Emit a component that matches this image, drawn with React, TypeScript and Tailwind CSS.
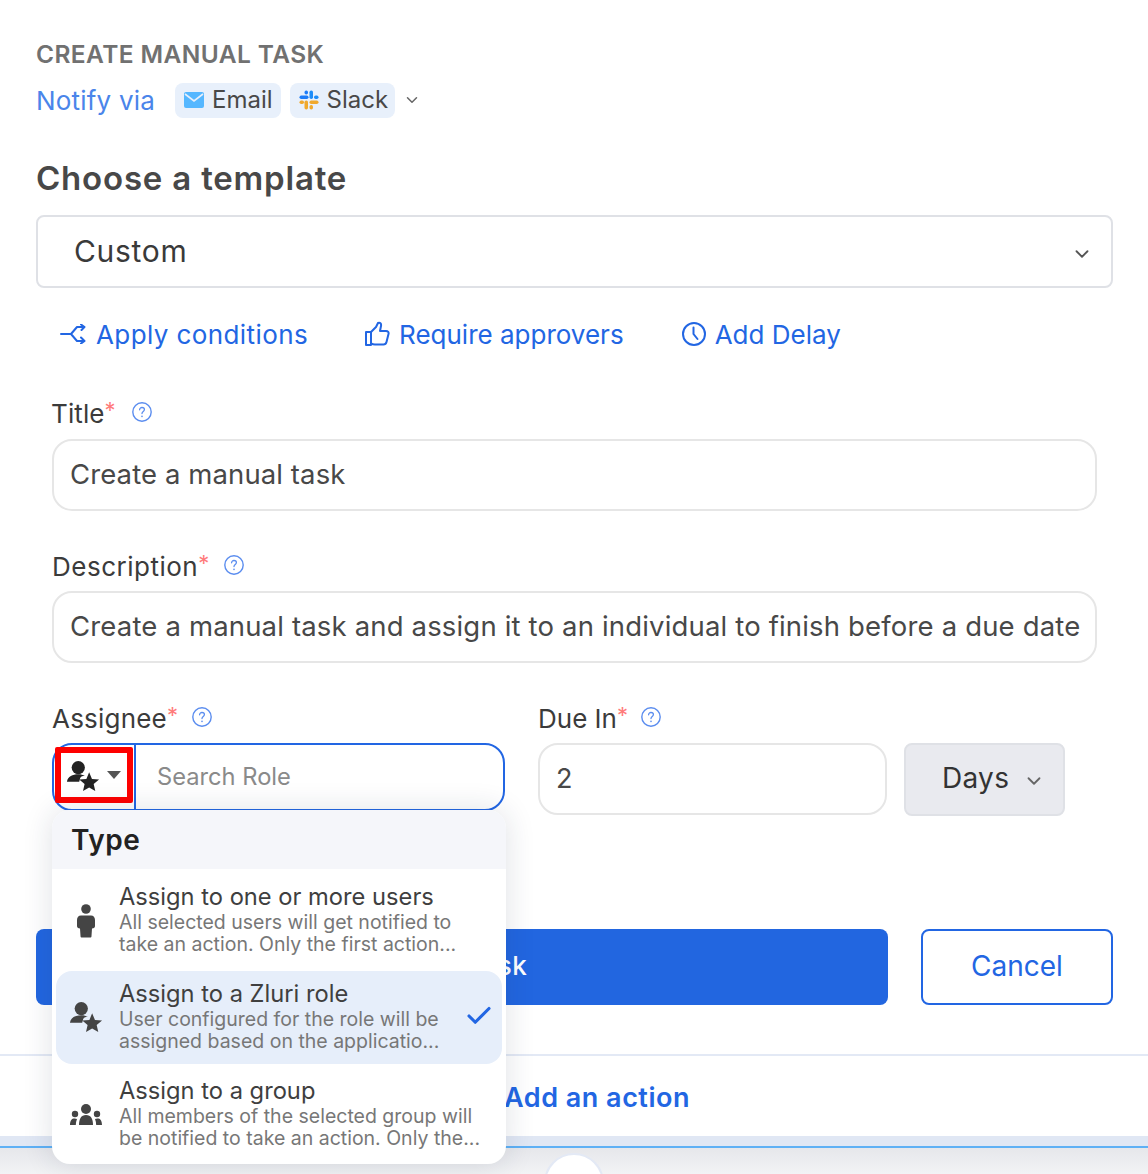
import React from "react";
import { ChevronDown, Check } from "lucide-react";

const Help = () => (
  <svg width="20" height="20" viewBox="0 0 20 20" fill="none" className="shrink-0">
    <circle cx="10" cy="10" r="9.2" stroke="#5b8def" strokeWidth="1.4" />
    <path d="M7.6 7.8c0-1.400 1.100-2.300 2.400-2.300s2.400.9 2.400 2.100c0 1.900-2.400 1.900-2.400 4" stroke="#5b8def" strokeWidth="1.3" strokeLinecap="round" />
    <circle cx="10" cy="14.4" r="0.8" fill="#5b8def" />
  </svg>
);

const Label = ({ text, className = "", gap = "ml-[15px]" }: { text: string; className?: string; gap?: string }) => (
  <div className={`flex items-center h-[30px] text-[26px] text-[#3b3b3b] ${className}`}>
    <span>{text}</span>
    <span className="self-start text-[#ff7b7b] text-[22px] leading-[24px]">*</span>
    <span className={`${gap} -mt-[2px]`}><Help /></span>
  </div>
);

const UserStar = ({ size = 36, color = "#222" }: { size?: number; color?: string }) => (
  <svg width={size} height={size} viewBox="0 0 36 36" fill={color}>
    <circle cx="13" cy="8" r="7" />
    <path d="M1 23c1-6 6-8 12-8 3 0 5 .6 7 1.800-2.500 0-4 .8-5 2.200l-1 4z" />
    <path d="M24.500 13l3 7 7.500.6-5.700 4.900 1.700 7.400-6.500-3.900-6.500 3.900 1.700-7.400-5.700-4.900 7.600-.6z" />
  </svg>
);

const Person = () => (
  <svg width="18" height="34" viewBox="0 0 18 34" fill="#444">
    <circle cx="9" cy="5" r="4.800" />
    <path d="M4 11.500h10c2.500 0 4 2 4 4.500v6c0 1.500-1 2.500-3 2.500l-.5 7.500c0 1-.5 1.500-1.500 1.500H5c-1 0-1.500-.5-1.500-1.500L3 24.500c-2 0-3-1-3-2.500v-6c0-2.500 1.500-4.500 4-4.500z" />
  </svg>
);

const Group = () => (
  <svg width="32" height="22" viewBox="0 0 32 22" fill="#444">
    <circle cx="16" cy="5" r="5" />
    <path d="M9 21c0-6 2-10 7-10s7 4 7 10z" />
    <circle cx="5" cy="10" r="3.200" />
    <path d="M0 21c0-3 1-6 3.500-6.500 1.500-.3 2.500 0 3.500.5-.8 2-1.200 4-1.200 6z" />
    <circle cx="27" cy="10" r="3.200" />
    <path d="M32 21c0-3-1-6-3.500-6.500-1.500-.3-2.500 0-3.500.5.800 2 1.200 4 1.200 6z" />
  </svg>
);

const Slack = () => (
  <svg width="20" height="20" viewBox="0 0 20 20">
    <rect x="0.500" y="5.500" width="9" height="3.500" rx="1.700" fill="#1d7cf8" />
    <rect x="5.500" y="0.500" width="3.500" height="4" rx="1.700" fill="#1d7cf8" />
    <rect x="10.500" y="0.500" width="3.500" height="8.500" rx="1.700" fill="#1d8cf8" />
    <rect x="15" y="5.500" width="4.500" height="3.500" rx="1.700" fill="#1d8cf8" />
    <rect x="10.500" y="10.500" width="9" height="3.500" rx="1.700" fill="#f0a92e" />
    <rect x="10.500" y="15" width="3.500" height="4.500" rx="1.700" fill="#f0a92e" />
    <rect x="5.500" y="10.500" width="3.500" height="9" rx="1.700" fill="#f0a92e" />
    <rect x="0.500" y="10.500" width="4.500" height="3.500" rx="1.700" fill="#f0a92e" />
  </svg>
);

const Mail = () => (
  <svg width="20" height="16" viewBox="0 0 20 16">
    <rect width="20" height="16" rx="2" fill="#55b7ff" />
    <path d="M1 2l9 7 9-7" fill="none" stroke="#e8f0fb" strokeWidth="1.600" />
  </svg>
);

const Branch = () => (
  <svg width="26" height="20" viewBox="0 0 26 20" fill="none" stroke="#2266e3" strokeWidth="2" strokeLinecap="round" strokeLinejoin="round">
    <path d="M1 10h10l6-7h7M11 10l6 7h7" />
    <path d="M21 0.500l3.500 2.500-3 3M21 13.500l3.500 3.500-3.500 2.500" />
  </svg>
);

const Thumb = () => (
  <svg width="26" height="26" viewBox="0 0 26 26" fill="none" stroke="#2266e3" strokeWidth="2" strokeLinejoin="round" strokeLinecap="round">
    <path d="M2 11h5v13H2z" />
    <path d="M7 11l5-5 2-4c2-1 3.500.5 3 3l-1 5h6c2 0 3 1.500 2.500 3l-2 8c-.4 1.500-1.500 2.500-3 2.500H11c-1.500 0-3-.5-4-1" />
  </svg>
);

const Clock = () => (
  <svg width="26" height="26" viewBox="0 0 26 26" fill="none" stroke="#2266e3" strokeWidth="2" strokeLinecap="round">
    <circle cx="13" cy="13" r="11" />
    <path d="M12.500 6.500V13l4 5" />
  </svg>
);

const Chip = ({ icon, text, pad }: { icon: React.ReactNode; text: string; pad: string }) => (
  <div className={`flex items-center gap-[8px] h-[35px] pl-[9px] ${pad} rounded-[8px] bg-[#e8f0fb] text-[24px] text-[#484848]`}>
    {icon}
    <span>{text}</span>
  </div>
);

const Field = ({ text, track }: { text: string; track: string }) => (
  <div className={`mx-[16px] h-[72px] flex items-center px-[16px] rounded-[20px] border-2 border-[#e6e6e6] bg-white text-[27.500px] text-[#484848] whitespace-nowrap overflow-hidden ${track}`}>
    {text}
  </div>
);

const Option = ({ icon, title, lines, active }: { icon: React.ReactNode; title: string; lines: string[]; active?: boolean }) => (
  <div className={`relative flex items-center h-[93px] mx-[4px] rounded-[16px] ${active ? "bg-[#e6eefa]" : ""}`}>
    <div className="w-[60px] flex justify-center shrink-0">{icon}</div>
    <div className="ml-[3px] -mt-[4px] flex flex-col">
      <div className="text-[23.700px] leading-[28px] text-[#3f3f3f] whitespace-nowrap">{title}</div>
      {lines.map((l) => (
        <div key={l} className="text-[19.500px] leading-[22px] text-[#777] whitespace-nowrap">{l}</div>
      ))}
    </div>
    {active && <Check size={30} strokeWidth={2.5} className="absolute right-[8px] top-[30px] text-[#2266e3]" />}
  </div>
);

export default function App() {
  return (
    <div className="relative h-[1174px] w-[1148px] overflow-hidden bg-white font-['Inter','Noto_Sans',sans-serif]">
      <div className="h-[1136px] flex flex-col">
        <div className="pl-[36px] pr-[35px] pt-[39px]">
          <div className="h-[30px] flex items-center text-[24.500px] tracking-[0.4px] font-semibold text-[#717171] whitespace-nowrap">CREATE MANUAL TASK</div>
          <div className="mt-[13px] flex items-center h-[36px]">
            <span className="text-[26px] tracking-[0.2px] text-[#4a85ea] mr-[20px]">Notify via</span>
            <Chip icon={<Mail />} text="Email" pad="pr-[8px]" />
            <span className="w-[9px]" />
            <Chip icon={<Slack />} text="Slack" pad="pr-[7px]" />
            <ChevronDown size={18} className="ml-[8px] text-[#666]" />
          </div>
          <div className="mt-[41px] h-[40px] flex items-center text-[33px] tracking-[0.8px] font-semibold text-[#484848] whitespace-nowrap">Choose a template</div>
          <div className="mt-[16px] h-[73px] flex items-center justify-between pl-[36px] pr-[18px] pb-[1px] rounded-[8px] border-2 border-[#dfe1e6] text-[30px] tracking-[0.7px] text-[#3a3a3a]">
            <span>Custom</span>
            <ChevronDown size={22} className="mt-[5px] text-[#555]" />
          </div>
          <div className="mt-[29px] h-[34px] flex items-center pl-[24px] text-[26px] text-[#2266e3] whitespace-nowrap">
            <Branch />
            <span className="ml-[10px] tracking-[0.4px]">Apply conditions</span>
            <span className="ml-[56px]"><Thumb /></span>
            <span className="ml-[9px]">Require approvers</span>
            <span className="ml-[57px]"><Clock /></span>
            <span className="ml-[8px]">Add Delay</span>
          </div>

          <div className="mt-[47px]">
            <Label text="Title" className="ml-[15px] tracking-[0.1px]" gap="ml-[16px]" />
            <div className="mt-[11px]"><Field text="Create a manual task" track="tracking-[0.1px]" /></div>
            <Label text="Description" className="ml-[16px] mt-[40px] tracking-[0.5px]" gap="ml-[14px]" />
            <div className="mt-[10px]"><Field text="Create a manual task and assign it to an individual to finish before a due date" track="tracking-[0.165px]" /></div>

            <div className="mt-[40px] ml-[16px] flex items-start">
              <div className="relative w-[453px]">
                <Label text="Assignee" className="tracking-[0.2px]" gap="ml-[14px]" />
                <div className="mt-[10px] h-[68px] flex rounded-[20px] border-2 border-[#2266e3] bg-white">
                  <div className="w-[82px] border-r-2 border-[#2266e3] flex items-center pl-[12px]">
                    <UserStar size={34} />
                    <svg width="14" height="8" viewBox="0 0 14 8" className="ml-[7px] -mt-[4px]"><path d="M0 0h14L7 8z" fill="#555" /></svg>
                  </div>
                  <div className="pl-[21px] flex items-center text-[23.700px] text-[#8a8a8a]">Search Role</div>
                </div>
                <div className="absolute left-[3px] top-[44px] w-[78px] h-[56px] border-[6px] border-[#fe0000] rounded-[2px]" />
                <div className="absolute left-0 top-[107px] w-[454px] h-[354px] rounded-[18px] bg-white shadow-[0_0_30px_rgba(30,40,70,0.14)] overflow-hidden">
                  <div className="h-[59px] bg-[#f5f6fa] flex items-center pl-[19px] text-[28px] tracking-[0.5px] font-semibold text-[#222]">Type</div>
                  <div className="h-[5px]" />
                  <Option icon={<Person />} title="Assign to one or more users" lines={["All selected users will get notified to", "take an action. Only the first action..."]} />
                  <div className="h-[4px]" />
                  <Option active icon={<UserStar size={34} color="#444" />} title="Assign to a Zluri role" lines={["User configured for the role will be", "assigned based on the applicatio..."]} />
                  <div className="h-[4px]" />
                  <Option icon={<Group />} title="Assign to a group" lines={["All members of the selected group will", "be notified to take an action. Only the..."]} />
                </div>
              </div>
              <div className="ml-[33px] w-[349px]">
                <Label text="Due In" gap="ml-[13px]" />
                <div className="mt-[10px] h-[72px] flex items-center pl-[16px] rounded-[20px] border-2 border-[#e6e6e6] text-[27px] text-[#484848]">2</div>
              </div>
              <div className="ml-[17px] mt-[40px] w-[161px] h-[73px] flex items-center pl-[36px] pb-[3px] rounded-[8px] border-2 border-[#dfe1e6] bg-[#e9eaef] text-[28px] tracking-[0.3px] text-[#333]">
                <span>Days</span>
                <ChevronDown size={22} className="ml-[14px] mt-[6px] text-[#666]" />
              </div>
            </div>

            <div className="mt-[113px] flex">
              <div className="w-[852px] h-[76px] flex items-center justify-center pl-[6px] pb-[3px] rounded-[8px] bg-[#2266e0] text-[26px] tracking-[0.5px] font-medium text-white">Save task</div>
              <div className="ml-[33px] w-[192px] h-[76px] flex items-center justify-center pb-[2px] rounded-[8px] border-2 border-[#2266e3] text-[28px] text-[#2266e3]">Cancel</div>
            </div>
          </div>
        </div>
        <div className="mt-[49px] border-t-2 border-[#e3e9f5] flex-1 flex items-center justify-center pt-[4px] pl-[46px] text-[27px] tracking-[0.5px] font-semibold text-[#2266e3]">
          <span>Add an action</span>
        </div>
      </div>
      <div className="h-[10px] bg-[#e0e7f4]" />
      <div className="h-[2px] bg-[#5eb0f5]" />
      <div className="h-[26px] bg-gradient-to-b from-[#e6e7eb] to-[#f2f3f5] flex justify-center">
        <div className="mt-[5px] w-[60px] h-[60px] rounded-full bg-white border-2 border-[#e3e9f5] flex justify-center pt-[20px]">
          <div className="w-[4px] h-[4px] rounded-full bg-[#2266e3]" />
        </div>
      </div>
    </div>
  );
}
